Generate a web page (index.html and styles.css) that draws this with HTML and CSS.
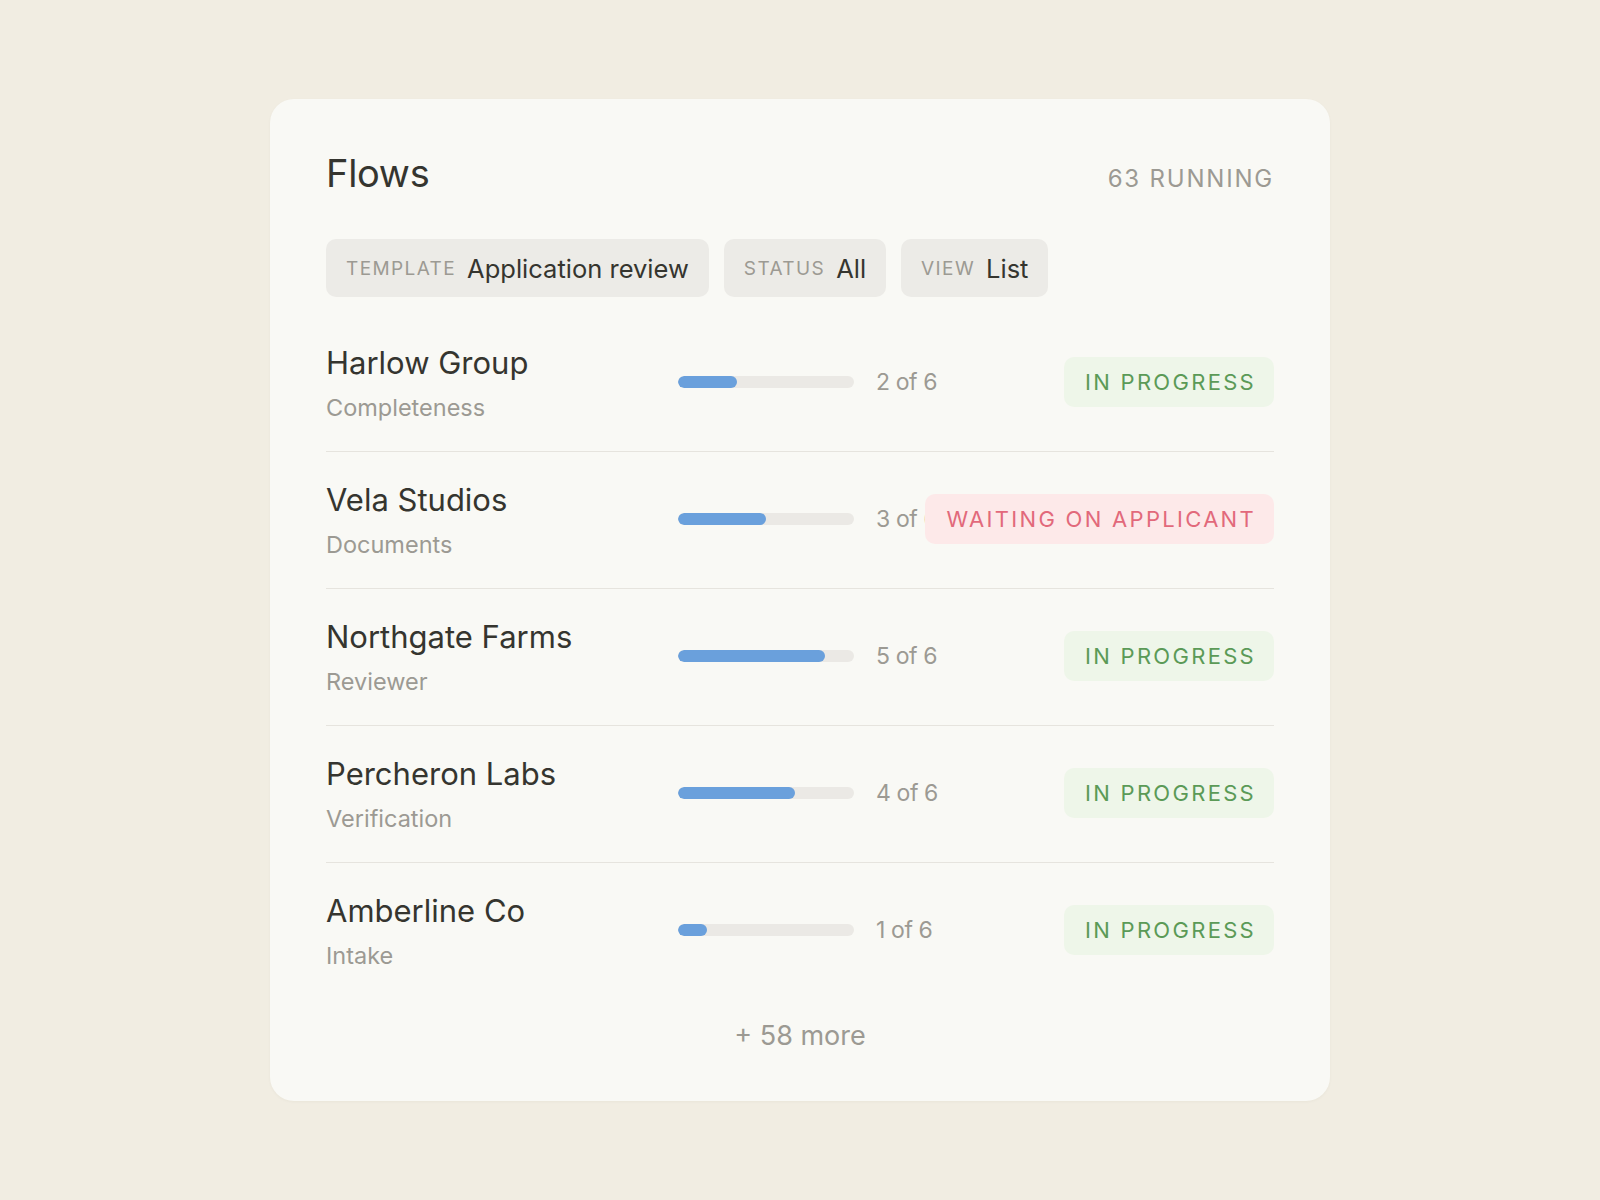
FILE: index.html
```html
<!DOCTYPE html>
<html lang="en">
<head>
    <meta charset="UTF-8">
    <meta name="viewport" content="width=device-width, initial-scale=1.0">
    <title>Flows</title>
    <link rel="stylesheet" href="styles.css">
</head>
<body>
    <div class="card">
        <div class="card-header">
            <h1>Flows</h1>
            <span class="running">63 running</span>
        </div>

        <div class="filters">
            <div class="chip"><span class="chip-label">Template</span><span class="chip-value">Application review</span></div>
            <div class="chip"><span class="chip-label">Status</span><span class="chip-value">All</span></div>
            <div class="chip"><span class="chip-label">View</span><span class="chip-value">List</span></div>
        </div>

        <div class="flow-list">
            <div class="flow-row">
                <div class="flow-name">
                    <div class="name">Harlow Group</div>
                    <div class="step">Completeness</div>
                </div>
                <div class="bar"><div class="bar-fill" style="width: 33.33%"></div></div>
                <div class="meta">
                    <span class="count">2 of 6</span>
                    <span class="badge badge-progress">In progress</span>
                </div>
            </div>
            <div class="flow-row">
                <div class="flow-name">
                    <div class="name">Vela Studios</div>
                    <div class="step">Documents</div>
                </div>
                <div class="bar"><div class="bar-fill" style="width: 50%"></div></div>
                <div class="meta">
                    <span class="count">3 of 6</span>
                    <span class="badge badge-waiting">Waiting on applicant</span>
                </div>
            </div>
            <div class="flow-row">
                <div class="flow-name">
                    <div class="name">Northgate Farms</div>
                    <div class="step">Reviewer</div>
                </div>
                <div class="bar"><div class="bar-fill" style="width: 83.33%"></div></div>
                <div class="meta">
                    <span class="count">5 of 6</span>
                    <span class="badge badge-progress">In progress</span>
                </div>
            </div>
            <div class="flow-row">
                <div class="flow-name">
                    <div class="name">Percheron Labs</div>
                    <div class="step">Verification</div>
                </div>
                <div class="bar"><div class="bar-fill" style="width: 66.67%"></div></div>
                <div class="meta">
                    <span class="count">4 of 6</span>
                    <span class="badge badge-progress">In progress</span>
                </div>
            </div>
            <div class="flow-row">
                <div class="flow-name">
                    <div class="name">Amberline Co</div>
                    <div class="step">Intake</div>
                </div>
                <div class="bar"><div class="bar-fill" style="width: 16.67%"></div></div>
                <div class="meta">
                    <span class="count">1 of 6</span>
                    <span class="badge badge-progress">In progress</span>
                </div>
            </div>
        </div>

        <div class="more">+ 58 more</div>
    </div>
</body>
</html>
```

FILE: styles.css
```css
:root {
    --page-bg: #f1ede2;
    --card-bg: #f9f9f5;
    --chip-bg: #ecebe7;
    --text-color: #35352f;
    --muted: #9c9a93;
    --divider: #e6e4de;
    --track: #ebe9e5;
    --fill: #6aa0dc;
    --green: #5b9a57;
    --green-bg: #eef6e9;
    --pink: #e2697b;
    --pink-bg: #fde9e9;
}

body {
    font-family: Inter, "Liberation Sans", Arial, sans-serif;
    display: flex;
    justify-content: center;
    align-items: center;
    min-height: 100vh;
    margin: 0;
    background-color: var(--page-bg);
    color: var(--text-color);
}

.card {
    width: 1060px;
    box-sizing: border-box;
    padding: 55px 56px 48px;
    background-color: var(--card-bg);
    border-radius: 24px;
    box-shadow: 0 1px 3px rgba(60, 50, 30, 0.04);
}

.card-header {
    display: flex;
    justify-content: space-between;
    align-items: baseline;
}
h1 {
    margin: 0;
    font-size: 38px;
    font-weight: 400;
    line-height: 1;
    letter-spacing: -0.3px;
}
.running {
    font-size: 24px;
    letter-spacing: 1.8px;
    text-transform: uppercase;
    color: var(--muted);
}

.filters {
    display: flex;
    gap: 15px;
    margin-top: 46px;
}
.chip {
    display: flex;
    align-items: center;
    gap: 11px;
    height: 58px;
    box-sizing: border-box;
    padding: 0 20px;
    background-color: var(--chip-bg);
    border-radius: 10px;
}
.chip-label {
    font-size: 19px;
    line-height: 1;
    letter-spacing: 1.4px;
    text-transform: uppercase;
    color: var(--muted);
}
.chip-value {
    font-size: 25.5px;
    line-height: 1;
}

.flow-list {
    margin-top: 18px;
}
.flow-row {
    display: grid;
    grid-template-columns: 352px 176px 1fr;
    align-items: center;
    padding: 30px 0 27px;
    border-bottom: 1px solid var(--divider);
}
.flow-row:last-child {
    border-bottom: none;
}
.name {
    font-size: 31px;
    line-height: 36px;
}
.step {
    margin-top: 11px;
    font-size: 23.5px;
    line-height: 32px;
    color: var(--muted);
}

.bar {
    height: 12px;
    margin-bottom: 5px;
    background-color: var(--track);
    border-radius: 9999px;
    overflow: hidden;
}
.bar-fill {
    height: 100%;
    background-color: var(--fill);
    border-radius: 9999px;
}

.meta {
    display: grid;
    align-items: center;
    padding-left: 22px;
    margin-bottom: 5px;
}
.count,
.badge {
    grid-area: 1 / 1;
}
.count {
    justify-self: start;
    font-size: 23px;
    letter-spacing: -0.4px;
    color: var(--muted);
}
.badge {
    justify-self: end;
    padding: 13px 18px 13px 21px;
    font-size: 22px;
    line-height: 24px;
    letter-spacing: 2.3px;
    text-transform: uppercase;
    border-radius: 10px;
}
.badge-progress {
    color: var(--green);
    background-color: var(--green-bg);
}
.badge-waiting {
    color: var(--pink);
    background-color: var(--pink-bg);
}

.more {
    margin-top: 21px;
    text-align: center;
    font-size: 27px;
    line-height: 1.2;
    color: var(--muted);
}
```
